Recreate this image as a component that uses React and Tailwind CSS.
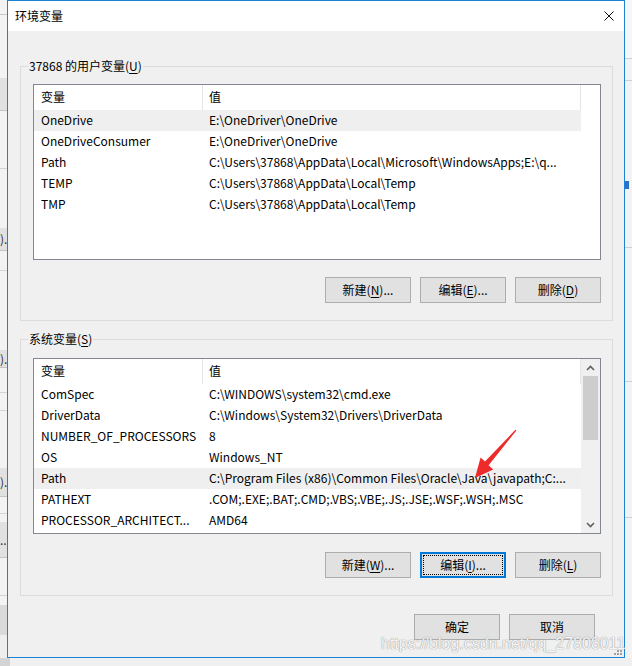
import React from "react";

const userVars = [
  ["OneDrive", "E:\\OneDriver\\OneDrive"],
  ["OneDriveConsumer", "E:\\OneDriver\\OneDrive"],
  ["Path", "C:\\Users\\37868\\AppData\\Local\\Microsoft\\WindowsApps;E:\\q..."],
  ["TEMP", "C:\\Users\\37868\\AppData\\Local\\Temp"],
  ["TMP", "C:\\Users\\37868\\AppData\\Local\\Temp"],
];

const systemVars = [
  ["ComSpec", "C:\\WINDOWS\\system32\\cmd.exe"],
  ["DriverData", "C:\\Windows\\System32\\Drivers\\DriverData"],
  ["NUMBER_OF_PROCESSORS", "8"],
  ["OS", "Windows_NT"],
  ["Path", "C:\\Program Files (x86)\\Common Files\\Oracle\\Java\\javapath;C:..."],
  ["PATHEXT", ".COM;.EXE;.BAT;.CMD;.VBS;.VBE;.JS;.JSE;.WSF;.WSH;.MSC"],
  ["PROCESSOR_ARCHITECT...", "AMD64"],
];

// bits of the window behind, peeking out on the left
const leftStrip = [
  ["h-[14px] bg-[#f3f3f3]", ""],
  ["h-[1px] bg-[#c8c8c8]", ""],
  ["h-[63px] bg-[#f3f3f3]", ""],
  ["h-[33px] bg-[#e1e1e1] border-b border-[#c4c4c4]", ""],
  ["h-[57px] bg-[#f3f3f3]", ""],
  ["h-[1px] bg-[#d4d4d4]", ""],
  ["h-[59px] bg-[#f3f3f3]", ""],
  ["h-[23px] bg-[#e1e1e1] border-b border-[#c4c4c4]", ")."],
  ["h-[19px] bg-[#f3f3f3]", ""],
  ["h-[1px] bg-[#d4d4d4]", ""],
  ["h-[79px] bg-[#f3f3f3]", ""],
  ["h-[18px] bg-[#e1e1e1] border-b border-[#c4c4c4]", ")."],
  ["h-[24px] bg-[#f3f3f3]", ""],
  ["h-[1px] bg-[#d4d4d4]", ""],
  ["h-[17px] bg-[#f3f3f3]", ""],
  ["h-[1px] bg-[#d4d4d4]", ""],
  ["h-[57px] bg-[#f3f3f3]", ""],
  ["h-[29px] bg-[#e1e1e1] border-b border-[#c4c4c4]", ")."],
  ["h-[16px] bg-[#f3f3f3]", ""],
  ["h-[1px] bg-[#d4d4d4]", ""],
  ["h-[8px] bg-[#f3f3f3]", ""],
  ["h-[36px] bg-[#e1e1e1] border-b border-[#c4c4c4]", "..."],
  ["h-[37px] bg-[#f3f3f3]", ""],
  ["h-[1px] bg-[#d4d4d4]", ""],
  ["h-[9px] bg-[#f3f3f3]", ""],
  ["h-[30px] bg-[#dadada]", ""],
  ["flex-1 bg-[#eeeeee]", ""],
];

function Mnemonic({ pre, letter, post }) {
  return (
    <span>
      {pre}
      <span className="underline underline-offset-[2px]">{letter}</span>
      {post}
    </span>
  );
}

function Button({ children, focused }) {
  return (
    <button
      className={
        "relative w-[86px] h-[26px] flex items-center justify-center pb-[1px] bg-[#e1e1e1] text-[12px] text-black " +
        (focused ? "border-2 border-[#0078d7]" : "border border-[#adadad]")
      }
    >
      {focused && (
        <span className="absolute inset-[1px] border border-dotted border-black" />
      )}
      {children}
    </button>
  );
}

function Chevron({ up }) {
  return (
    <svg width="9" height="6" viewBox="0 0 9 6">
      <polyline
        points={up ? "1,5 4.5,1.5 8,5" : "1,1 4.5,4.5 8,1"}
        fill="none"
        stroke="#606060"
        strokeWidth="1.6"
      />
    </svg>
  );
}

function ListBox({ rows, selected, scrollbar }) {
  return (
    <div className="w-full h-[176px] border border-[#828790] bg-white flex">
      <div className="w-[547px] flex flex-col">
        <div className="h-[25px] flex text-[12px]">
          <div className="w-[169px] pl-[7px] pb-[1px] flex items-center border-r border-[#e5e5e5]">变量</div>
          <div className="w-[378px] pl-[6px] pb-[1px] flex items-center border-r border-[#e5e5e5]">值</div>
        </div>
        {rows.map(([name, value], i) => (
          <div
            key={name + i}
            className={
              "h-[21px] flex items-center pb-[1px] text-[12px] whitespace-nowrap " +
              (i === selected ? "bg-[#efefef]" : "")
            }
          >
            <div className="w-[169px] pl-[7px] overflow-hidden">{name}</div>
            <div className="w-[378px] pl-[6px] overflow-hidden">{value}</div>
          </div>
        ))}
      </div>
      {scrollbar ? (
        <div className="flex-1 bg-[#f0f0f0] flex flex-col items-center">
          <div className="h-[17px] flex items-center justify-center">
            <Chevron up />
          </div>
          <div className="w-[15px] h-[64px] bg-[#cdcdcd]" />
          <div className="flex-1" />
          <div className="h-[17px] flex items-center justify-center">
            <Chevron />
          </div>
        </div>
      ) : (
        <div className="flex-1" />
      )}
    </div>
  );
}

function GroupBox({ title, className, children }) {
  return (
    <fieldset
      className={"w-[593px] ml-[12px] border border-[#dcdcdc] pl-[7px] pr-[11px] " + className}
    >
      <legend className="px-[1px] h-[16px] leading-[15px] text-[12px]">{title}</legend>
      <div className="pl-[5px]">{children}</div>
    </fieldset>
  );
}

function RedArrow() {
  return (
    <svg
      className="absolute left-[465px] top-[425px]"
      width="60"
      height="60"
      viewBox="465 425 60 60"
    >
      <polygon
        points="516.4,430.6 488.6,465.2 493.2,469.4 475,478 480.6,457.6 485,461.6 515.4,429.8"
        fill="#ee2b2b"
      />
    </svg>
  );
}

export default function App() {
  return (
    <div
      className="relative w-[632px] h-[666px] flex flex-col bg-[#f0f0f0] overflow-hidden text-black"
      style={{ fontFamily: '"Noto Sans CJK SC", "Noto Sans", sans-serif' }}
    >
      <div className="flex h-[658px]">
        {/* background window, left */}
        <div className="w-[7px] flex flex-col overflow-hidden">
          {leftStrip.map(([cls, txt], i) => (
            <div key={i} className={cls + " text-[12px] leading-none flex items-center text-[#333] whitespace-nowrap"}>
              {txt}
            </div>
          ))}
        </div>

        {/* dialog */}
        <div className="relative w-[618px] h-[658px] border border-[#1883d7] flex flex-col">
          <div className="h-[30px] bg-white flex items-center justify-between pl-[7px] pr-[10px]">
            <span className="text-[12px] pb-[1px]">环境变量</span>
            <svg width="10" height="10" viewBox="0 0 10 10">
              <path d="M0.5 0.5 L9.5 9.5 M9.5 0.5 L0.5 9.5" stroke="#111" strokeWidth="1" />
            </svg>
          </div>

          <div className="flex-1 bg-[#f0f0f0] flex flex-col">
            <GroupBox
              className="mt-[27px] pb-[17px]"
              title={<Mnemonic pre="37868 的用户变量(" letter="U" post=")" />}
            >
              <div className="mt-[10px]">
                <ListBox rows={userVars} selected={0} />
              </div>
              <div className="mt-[17px] flex justify-end gap-[9px]">
                <Button><Mnemonic pre="新建(" letter="N" post=")..." /></Button>
                <Button><Mnemonic pre="编辑(" letter="E" post=")..." /></Button>
                <Button><Mnemonic pre="删除(" letter="D" post=")" /></Button>
              </div>
            </GroupBox>

            <GroupBox
              className="mt-[10px] pb-[17px]"
              title={<Mnemonic pre="系统变量(" letter="S" post=")" />}
            >
              <div className="mt-[11px]">
                <ListBox rows={systemVars} selected={4} scrollbar />
              </div>
              <div className="mt-[18px] flex justify-end gap-[9px]">
                <Button><Mnemonic pre="新建(" letter="W" post=")..." /></Button>
                <Button focused><Mnemonic pre="编辑(" letter="I" post=")..." /></Button>
                <Button><Mnemonic pre="删除(" letter="L" post=")" /></Button>
              </div>
            </GroupBox>

            <div className="mt-[18px] flex justify-end gap-[9px] pr-[29px]">
              <Button>确定</Button>
              <Button>取消</Button>
            </div>
          </div>

          {/* resize grip */}
          <div className="absolute right-[2px] bottom-[2px] grid grid-cols-3 gap-[1px]">
            <span className="w-[2px] h-[2px]" />
            <span className="w-[2px] h-[2px]" />
            <span className="w-[2px] h-[2px] bg-[#a0a0a0]" />
            <span className="w-[2px] h-[2px]" />
            <span className="w-[2px] h-[2px] bg-[#a0a0a0]" />
            <span className="w-[2px] h-[2px] bg-[#a0a0a0]" />
            <span className="w-[2px] h-[2px] bg-[#a0a0a0]" />
            <span className="w-[2px] h-[2px] bg-[#a0a0a0]" />
            <span className="w-[2px] h-[2px] bg-[#a0a0a0]" />
          </div>
        </div>

        {/* background window, right */}
        <div className="flex-1 flex flex-col">
          <div className="h-[58px] bg-[#f7f7f7]" />
          <div className="h-[1px] bg-[#d0d0d0]" />
          <div className="h-[21px] bg-[#f3f3f3]" />
          <div className="h-[1px] bg-[#d0d0d0]" />
          <div className="h-[99px] bg-[#f3f3f3]" />
          <div className="h-[10px] bg-[#f3f3f3] flex items-center">
            <span className="w-[4px] h-[8px] bg-[#2f6fc9]" />
          </div>
          <div className="h-[57px] bg-[#f3f3f3]" />
          <div className="h-[1px] bg-[#d0d0d0]" />
          <div className="h-[133px] bg-[#f3f3f3]" />
          <div className="h-[1px] bg-[#d0d0d0]" />
          <div className="h-[135px] bg-[#f3f3f3]" />
          <div className="h-[1px] bg-[#d0d0d0]" />
          <div className="flex-1 bg-[#f3f3f3]" />
        </div>
      </div>

      <div className="h-[8px] flex">
        <div className="w-[10px] bg-[#d4d4d4]" />
        <div className="flex-1 bg-[#f0f0f0]" />
      </div>

      <RedArrow />

      <div
        className="absolute left-[381px] top-[634px] text-[16px] leading-[20px] text-white/90 whitespace-nowrap"
        style={{ fontFamily: '"Liberation Sans", Arial, sans-serif', textShadow: "0 0 1px #9a9a9a, 0 0 1px #9a9a9a" }}
      >
        https://blog.csdn.net/qq_27808011
      </div>
    </div>
  );
}
